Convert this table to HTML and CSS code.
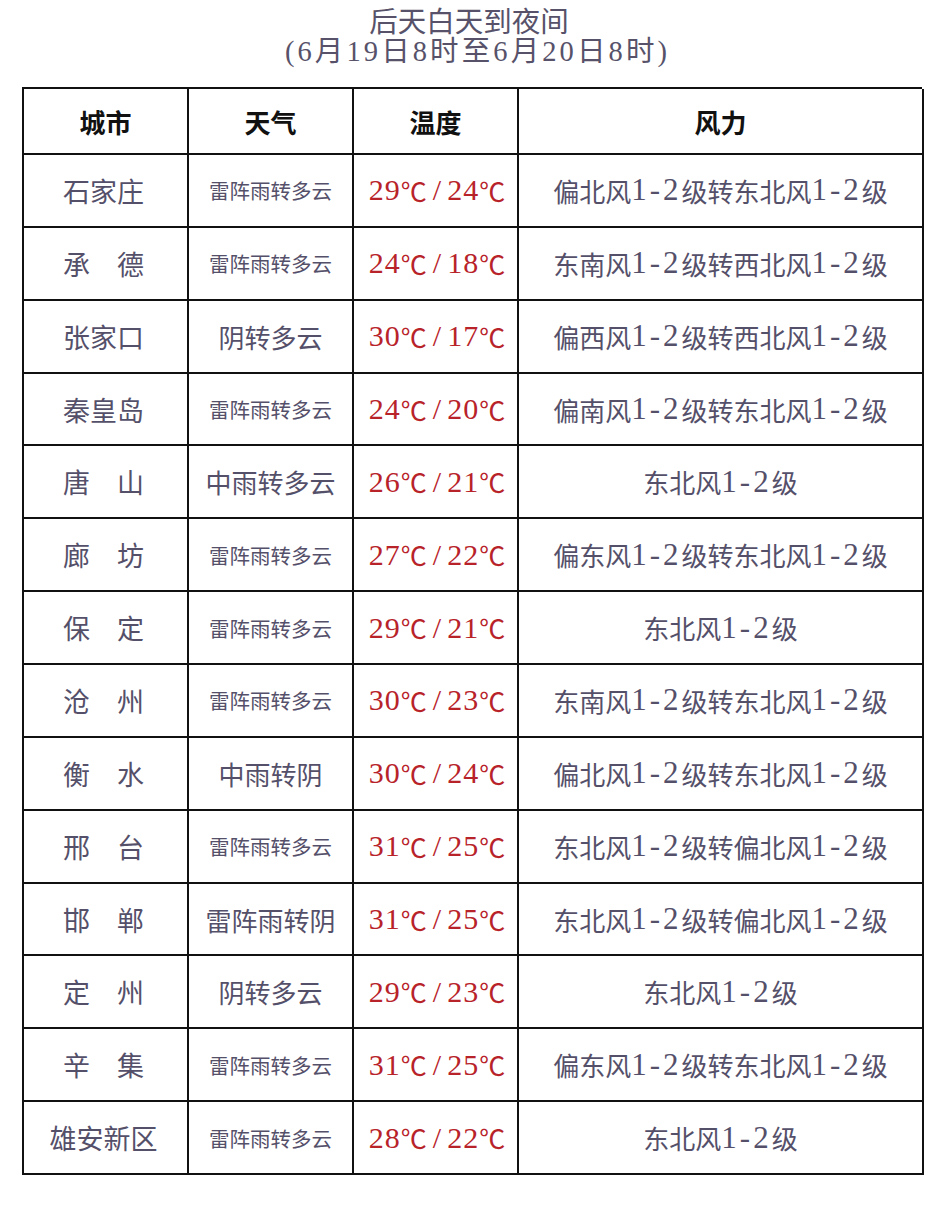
FILE: index.html
```html
<!DOCTYPE html>
<html lang="zh-CN">
<head>
<meta charset="utf-8">
<title>后天白天到夜间</title>
<link rel="stylesheet" href="styles.css">
</head>
<body>
<div class="page">
  <header class="title">
    <div class="t1">后天白天到夜间</div>
    <div class="t2">(6月19日8时至6月20日8时)</div>
  </header>
  <div class="grid">
    <div class="cell head">城市</div>
    <div class="cell head">天气</div>
    <div class="cell head">温度</div>
    <div class="cell head">风力</div>

    <div class="cell city">石家庄</div><div class="cell wx small">雷阵雨转多云</div><div class="cell temp">29<span class="c">℃</span><span class="s">/</span>24<span class="c">℃</span></div><div class="cell wind">偏北风<span class="n">1-2</span>级转东北风<span class="n">1-2</span>级</div>
    <div class="cell city">承　德</div><div class="cell wx small">雷阵雨转多云</div><div class="cell temp">24<span class="c">℃</span><span class="s">/</span>18<span class="c">℃</span></div><div class="cell wind">东南风<span class="n">1-2</span>级转西北风<span class="n">1-2</span>级</div>
    <div class="cell city">张家口</div><div class="cell wx">阴转多云</div><div class="cell temp">30<span class="c">℃</span><span class="s">/</span>17<span class="c">℃</span></div><div class="cell wind">偏西风<span class="n">1-2</span>级转西北风<span class="n">1-2</span>级</div>
    <div class="cell city">秦皇岛</div><div class="cell wx small">雷阵雨转多云</div><div class="cell temp">24<span class="c">℃</span><span class="s">/</span>20<span class="c">℃</span></div><div class="cell wind">偏南风<span class="n">1-2</span>级转东北风<span class="n">1-2</span>级</div>
    <div class="cell city">唐　山</div><div class="cell wx">中雨转多云</div><div class="cell temp">26<span class="c">℃</span><span class="s">/</span>21<span class="c">℃</span></div><div class="cell wind">东北风<span class="n">1-2</span>级</div>
    <div class="cell city">廊　坊</div><div class="cell wx small">雷阵雨转多云</div><div class="cell temp">27<span class="c">℃</span><span class="s">/</span>22<span class="c">℃</span></div><div class="cell wind">偏东风<span class="n">1-2</span>级转东北风<span class="n">1-2</span>级</div>
    <div class="cell city">保　定</div><div class="cell wx small">雷阵雨转多云</div><div class="cell temp">29<span class="c">℃</span><span class="s">/</span>21<span class="c">℃</span></div><div class="cell wind">东北风<span class="n">1-2</span>级</div>
    <div class="cell city">沧　州</div><div class="cell wx small">雷阵雨转多云</div><div class="cell temp">30<span class="c">℃</span><span class="s">/</span>23<span class="c">℃</span></div><div class="cell wind">东南风<span class="n">1-2</span>级转东北风<span class="n">1-2</span>级</div>
    <div class="cell city">衡　水</div><div class="cell wx">中雨转阴</div><div class="cell temp">30<span class="c">℃</span><span class="s">/</span>24<span class="c">℃</span></div><div class="cell wind">偏北风<span class="n">1-2</span>级转东北风<span class="n">1-2</span>级</div>
    <div class="cell city">邢　台</div><div class="cell wx small">雷阵雨转多云</div><div class="cell temp">31<span class="c">℃</span><span class="s">/</span>25<span class="c">℃</span></div><div class="cell wind">东北风<span class="n">1-2</span>级转偏北风<span class="n">1-2</span>级</div>
    <div class="cell city">邯　郸</div><div class="cell wx">雷阵雨转阴</div><div class="cell temp">31<span class="c">℃</span><span class="s">/</span>25<span class="c">℃</span></div><div class="cell wind">东北风<span class="n">1-2</span>级转偏北风<span class="n">1-2</span>级</div>
    <div class="cell city">定　州</div><div class="cell wx">阴转多云</div><div class="cell temp">29<span class="c">℃</span><span class="s">/</span>23<span class="c">℃</span></div><div class="cell wind">东北风<span class="n">1-2</span>级</div>
    <div class="cell city">辛　集</div><div class="cell wx small">雷阵雨转多云</div><div class="cell temp">31<span class="c">℃</span><span class="s">/</span>25<span class="c">℃</span></div><div class="cell wind">偏东风<span class="n">1-2</span>级转东北风<span class="n">1-2</span>级</div>
    <div class="cell city">雄安新区</div><div class="cell wx small">雷阵雨转多云</div><div class="cell temp">28<span class="c">℃</span><span class="s">/</span>22<span class="c">℃</span></div><div class="cell wind">东北风<span class="n">1-2</span>级</div>
  </div>
</div>
</body>
</html>
```

FILE: styles.css
```css
* { box-sizing: border-box; }
html, body { margin: 0; padding: 0; background: #ffffff; }
body {
  font-family: "Liberation Serif", "Noto Sans CJK SC", serif;
  color: #55506a;
}
.page {
  width: 942px;
  height: 1218px;
  padding: 8px 20px 0 22px;
}
.title {
  text-align: center;
  font-size: 28.5px;
  line-height: 29px;
  height: 79px;
  color: #57526a;
}
.title .t1 { padding-right: 6px; }
.title .t2 { padding-left: 11px; letter-spacing: 3.1px; }
.grid {
  display: grid;
  width: 900px;
  grid-template-columns: 165px 165px 165px 405px;
  grid-template-rows: 66px repeat(14, 72.86px);
  border-top: 2px solid #111;
  border-left: 2px solid #111;
}
.cell {
  display: flex;
  align-items: center;
  justify-content: center;
  border-right: 2px solid #111;
  border-bottom: 2px solid #111;
  font-size: 26px;
  white-space: nowrap;
}
.head { color: #111; font-weight: bold; }
.city { font-size: 27px; padding-right: 4px; }
.wx { font-size: 26px; }
.wx.small { font-size: 20.5px; }
.temp { color: #b8232a; font-size: 30px; letter-spacing: 1px; padding-left: 4px; }
.temp .c { font-family: "Noto Sans CJK SC", sans-serif; font-size: 26px; }
.temp .s { margin: 0 5px; }
.wind { font-size: 26px; }
.n { font-size: 31px; letter-spacing: 3px; }
```
